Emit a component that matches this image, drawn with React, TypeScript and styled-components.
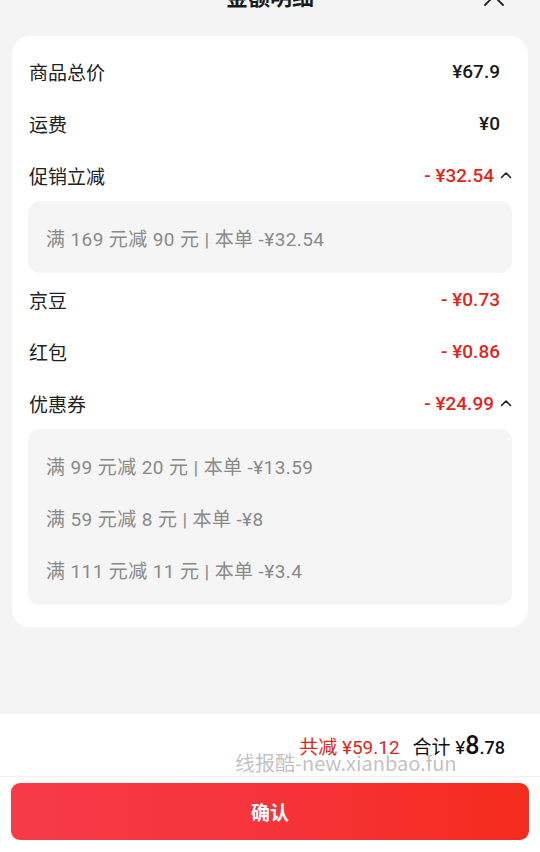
import React from "react";
import styled, { createGlobalStyle } from "styled-components";

const Global = createGlobalStyle`
  html, body { margin: 0; padding: 0; background: #f4f4f4; }
  body { font-family: Roboto, "Noto Sans CJK SC", sans-serif; color: #1a1a1a; }
  * { box-sizing: border-box; }
`;

const Page = styled.div`
  width: 540px;
  height: 852px;
  display: flex;
  flex-direction: column;
  background: #f4f4f4;
  overflow: hidden;
`;

const Header = styled.div`
  height: 36px;
  flex: none;
  display: flex;
  justify-content: center;
  align-items: flex-start;
  position: relative;
`;

const Title = styled.div`
  margin-top: -19px;
  line-height: 28px;
  font-size: 22px;
  font-weight: 700;
  color: #1a1a1a;
  font-family: "Noto Sans CJK SC", sans-serif;
`;

const Close = styled.svg`
  position: absolute;
  right: 35px;
  top: -15px;
  width: 22px;
  height: 22px;
`;

const Card = styled.div`
  margin: 0 12px;
  background: #fff;
  border-radius: 18px;
  padding: 9px 16px 22px;
  display: flex;
  flex-direction: column;
`;

const Row = styled.div`
  height: 52px;
  display: flex;
  align-items: center;
  justify-content: space-between;
  padding: 0 12px 0 1px;
`;

const Label = styled.span`
  font-family: "Noto Sans CJK SC", sans-serif;
  font-size: 19px;
  color: #222;
`;

const ValueWrap = styled.span<{ $fold?: boolean }>`
  display: flex;
  align-items: center;
  gap: 6px;
  margin-right: ${(p) => (p.$fold ? "-12px" : "0")};
`;

const Value = styled.span<{ $red?: boolean }>`
  font-family: Roboto, "Noto Sans CJK SC", sans-serif;
  font-size: 19px;
  font-weight: 500;
  color: ${(p) => (p.$red ? "#e1251b" : "#1a1a1a")};
  white-space: pre;
`;

const Detail = styled.div`
  background: #f5f5f5;
  border-radius: 12px;
  padding: 10px 18px;
  display: flex;
  flex-direction: column;
`;

const DetailLine = styled.div`
  height: 52px;
  display: flex;
  align-items: center;
  font-family: Roboto, "Noto Sans CJK SC", sans-serif;
  font-size: 19px;
  letter-spacing: 0.4px;
  color: #8a8a8a;
  white-space: pre;
`;

const Spacer = styled.div`
  flex: 1;
`;

const Footer = styled.div`
  flex: none;
  background: #fff;
  display: flex;
  flex-direction: column;
  position: relative;
`;

const Totals = styled.div`
  height: 63px;
  display: flex;
  align-items: center;
  justify-content: flex-end;
  gap: 13px;
  padding-right: 35px;
  border-bottom: 1px solid #f1f1f1;
`;

const Saved = styled.span`
  font-family: Roboto, "Noto Sans CJK SC", sans-serif;
  font-size: 19px;
  color: #e1251b;
`;

const Total = styled.span`
  font-family: Roboto, "Noto Sans CJK SC", sans-serif;
  font-size: 19px;
  color: #111;
  display: flex;
  align-items: baseline;
`;

const Big = styled.span`
  font-size: 25px;
  font-weight: 500;
`;

const Small = styled.span`
  font-size: 18px;
  font-weight: 500;
`;

const Watermark = styled.div`
  position: absolute;
  left: 235px;
  top: 34px;
  font-family: "Noto Sans CJK SC", sans-serif;
  font-size: 20px;
  color: rgba(140, 140, 140, 0.55);
  pointer-events: none;
  white-space: nowrap;
`;

const ButtonArea = styled.div`
  padding: 6px 11px 12px;
`;

const Confirm = styled.button`
  width: 100%;
  height: 57px;
  border: none;
  border-radius: 9px;
  background: linear-gradient(90deg, #f63b48 0%, #f5333a 50%, #f52b1c 100%);
  color: #fff;
  font-family: "Noto Sans CJK SC", sans-serif;
  font-size: 19px;
  font-weight: 700;
  display: flex;
  align-items: center;
  justify-content: center;
`;

const Chevron = () => (
  <svg width="12" height="8" viewBox="0 0 12 8">
    <path d="M1.5 6.5 L6 2 L10.5 6.5" fill="none" stroke="#222" strokeWidth="1.6" strokeLinecap="round" strokeLinejoin="round" />
  </svg>
);

export default function App() {
  return (
    <>
      <Global />
      <Page>
        <Header>
          <Title>金额明细</Title>
          <Close viewBox="0 0 22 22">
            <path d="M2 2 L20 20 M20 2 L2 20" stroke="#222" strokeWidth="1.8" strokeLinecap="round" />
          </Close>
        </Header>
        <Card>
          <Row>
            <Label>商品总价</Label>
            <Value>¥67.9</Value>
          </Row>
          <Row>
            <Label>运费</Label>
            <Value>¥0</Value>
          </Row>
          <Row>
            <Label>促销立减</Label>
            <ValueWrap $fold>
              <Value $red>- ¥32.54</Value>
              <Chevron />
            </ValueWrap>
          </Row>
          <Detail>
            <DetailLine>满 169 元减 90 元 | 本单 -¥32.54</DetailLine>
          </Detail>
          <Row>
            <Label>京豆</Label>
            <Value $red>- ¥0.73</Value>
          </Row>
          <Row>
            <Label>红包</Label>
            <Value $red>- ¥0.86</Value>
          </Row>
          <Row>
            <Label>优惠券</Label>
            <ValueWrap $fold>
              <Value $red>- ¥24.99</Value>
              <Chevron />
            </ValueWrap>
          </Row>
          <Detail>
            <DetailLine>满 99 元减 20 元 | 本单 -¥13.59</DetailLine>
            <DetailLine>满 59 元减 8 元 | 本单 -¥8</DetailLine>
            <DetailLine>满 111 元减 11 元 | 本单 -¥3.4</DetailLine>
          </Detail>
        </Card>
        <Spacer />
        <Footer>
          <Totals>
            <Saved>共减 ¥59.12</Saved>
            <Total>
              合计 ¥<Big>8</Big>
              <Small>.78</Small>
            </Total>
          </Totals>
          <Watermark>线报酷-new.xianbao.fun</Watermark>
          <ButtonArea>
            <Confirm>确认</Confirm>
          </ButtonArea>
        </Footer>
      </Page>
    </>
  );
}
